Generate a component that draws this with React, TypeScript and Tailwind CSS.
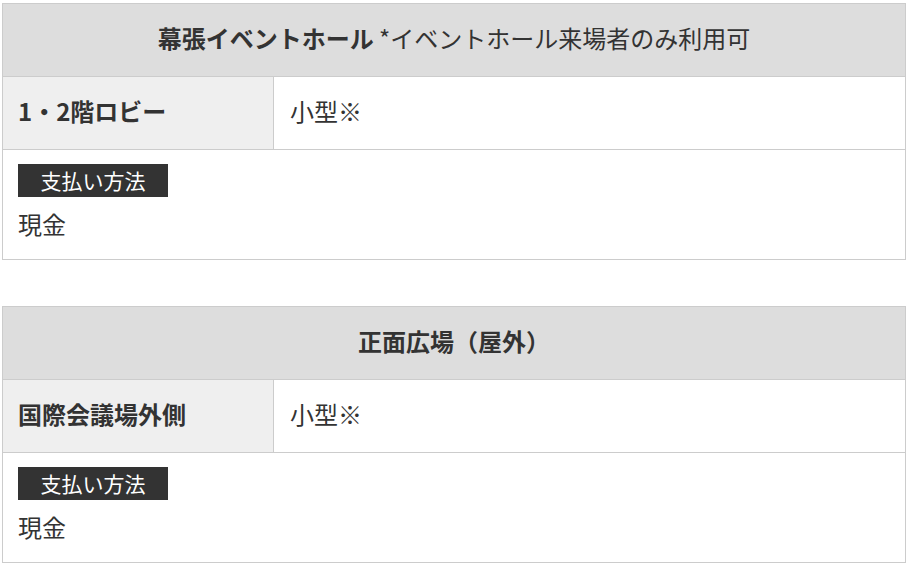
const sections = [
  {
    title: '幕張イベントホール',
    note: ' *イベントホール来場者のみ利用可',
    place: '1・2階ロビー',
    size: '小型※',
    payment: '現金',
  },
  {
    title: '正面広場（屋外）',
    note: '',
    place: '国際会議場外側',
    size: '小型※',
    payment: '現金',
  },
]

function Section({ s }: { s: (typeof sections)[number] }) {
  return (
    <div className="border border-[#cccccc] text-[#333333]">
      <div className="flex items-center justify-center bg-[#dddddd] px-4 pb-[20px] pt-[16px] text-[24px] leading-[36px]">
        <span>
          <span className="font-bold">{s.title}</span>
          {s.note}
        </span>
      </div>
      <div className="flex border-t border-[#cccccc]">
        <div className="w-[271px] shrink-0 border-r border-[#cccccc] bg-[#efefef] px-[15px] pb-[20px] pt-[16px] text-[24px] font-bold leading-[36px]">
          {s.place}
        </div>
        <div className="flex-1 px-4 pb-[20px] pt-[16px] text-[24px] leading-[36px]">{s.size}</div>
      </div>
      <div className="border-t border-[#cccccc] px-[15px] pb-[17px] pt-[14px]">
        <div className="w-[150px] bg-[#333333] text-center text-[21px] leading-[32px] pb-px text-white">
          支払い方法
        </div>
        <p className="mt-[9px] text-[24px] leading-[36px]">{s.payment}</p>
      </div>
    </div>
  )
}

export default function App() {
  return (
    <div className="min-h-screen bg-white pl-[2px] pr-[4px] pt-[3px] font-['Noto_Sans_CJK_JP','Noto_Sans',sans-serif]">
      <div className="flex flex-col gap-[46px]">
        {sections.map((s) => (
          <Section key={s.title} s={s} />
        ))}
      </div>
    </div>
  )
}
